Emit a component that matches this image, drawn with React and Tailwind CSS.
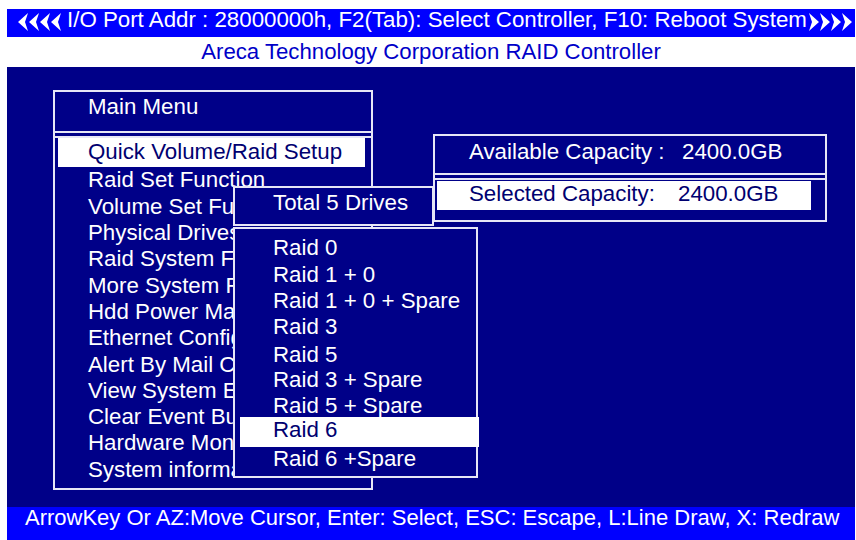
import React from 'react'

const mainItems = [
  'Quick Volume/Raid Setup',
  'Raid Set Function',
  'Volume Set Function',
  'Physical Drives',
  'Raid System Function',
  'More System Functions',
  'Hdd Power Management',
  'Ethernet Configuration',
  'Alert By Mail Config',
  'View System Events',
  'Clear Event Buffer',
  'Hardware Monitor',
  'System information',
]

const raidLevels = [
  'Raid 0',
  'Raid 1 + 0',
  'Raid 1 + 0 + Spare',
  'Raid 3',
  'Raid 5',
  'Raid 3 + Spare',
  'Raid 5 + Spare',
]

function Arrows({ dir }) {
  // four notched arrowheads, like the BIOS glyphs
  const heads = [0, 11, 22, 33]
  return (
    <svg width="44" height="18" viewBox="0 0 44 18" className="shrink-0 mt-[4px]">
      <g fill="#ffffff" transform={dir === 'right' ? 'translate(44 0) scale(-1 1)' : undefined}>
        {heads.map((x) => (
          <path key={x} d={`M${x} 9 L${x + 10} 0 L${x + 7} 9 L${x + 10} 18 Z`} />
        ))}
      </g>
    </svg>
  )
}

export default function App() {
  return (
    <div className="w-[856px] h-[540px] overflow-hidden bg-white pl-[7px] pr-[1px] pt-[9px] flex flex-col font-['Liberation_Sans',Arial,sans-serif]">

      {/* top status bar */}
      <div className="h-[28px] shrink-0 bg-[#0000ff] text-white flex items-start pl-[11px]">
        <Arrows dir="left" />
        <span className="ml-[5px] mr-[1px] text-[22.3px] leading-[22px] whitespace-nowrap">
          I/O Port Addr : 28000000h, F2(Tab): Select Controller, F10: Reboot System
        </span>
        <Arrows dir="right" />
      </div>

      {/* title band */}
      <div className="h-[30px] shrink-0 flex items-center justify-center text-[#0000c8] text-[22.2px] leading-[26px]">
        Areca Technology Corporation RAID Controller
      </div>

      {/* main screen */}
      <div className="relative h-[440px] shrink-0 bg-[#000088] text-white text-[22.3px]">

        {/* Main Menu */}
        <div className="mt-[23px] ml-[46px] w-[320px] h-[400px] border-2 border-[#e6e6f6] flex flex-col">
          <div className="h-[39px] shrink-0 pl-[33px] leading-[30px]">Main Menu</div>
          <div className="h-[7px] shrink-0 border-y-2 border-[#e6e6f6]" />
          <div className="flex flex-col">
            {mainItems.map((item, i) => (
              <div
                key={item}
                className={
                  i === 0
                    ? 'h-[29px] ml-[3px] mr-[6px] pl-[30px] pb-[2px] flex items-center bg-white text-[#000070] whitespace-nowrap'
                    : 'h-[26.3px] ml-[3px] mr-[6px] pl-[30px] flex items-center whitespace-nowrap'
                }
              >
                {item}
              </div>
            ))}
          </div>
        </div>

        {/* Capacity window */}
        <div className="absolute left-[426px] top-[67px] w-[394px] h-[88px] border-2 border-[#e6e6f6] bg-[#000088] flex flex-col">
          <div className="h-[37px] shrink-0 pl-[34px] leading-[32px] flex whitespace-nowrap">
            <span className="w-[213px]">Available Capacity :</span>
            <span>2400.0GB</span>
          </div>
          <div className="h-[7px] shrink-0 border-y-2 border-[#e6e6f6]" />
          <div className="mt-[1px] ml-[2px] w-[374px] h-[29px] pl-[32px] pb-[4px] bg-white text-[#000070] flex items-center whitespace-nowrap">
            <span className="w-[209px]">Selected Capacity:</span>
            <span>2400.0GB</span>
          </div>
        </div>

        {/* Raid level popup */}
        <div className="absolute left-[226px] top-[119px] flex flex-col">
          <div className="w-[201px] h-[40px] border-2 border-[#e6e6f6] bg-[#000088] pl-[38px] leading-[30px] whitespace-nowrap">
            Total 5 Drives
          </div>
          <div className="mt-[1px] w-[245px] h-[251px] border-2 border-[#e6e6f6] bg-[#000088] pt-[6px] flex flex-col">
            {raidLevels.map((r, i) => (
              <div
                key={r}
                className={
                  i === 4
                    ? 'h-[26.3px] shrink-0 pl-[38px] pt-[3px] flex items-center whitespace-nowrap'
                    : 'h-[26.3px] shrink-0 pl-[38px] flex items-center whitespace-nowrap'
                }
              >
                {r}
              </div>
            ))}
            <div className="-mt-[2px] ml-[5px] -mr-[3px] h-[30px] shrink-0 pl-[33px] pb-[5px] bg-white text-[#000070] flex items-center">
              Raid 6
            </div>
            <div className="h-[26px] shrink-0 pl-[38px] pb-[3px] flex items-center whitespace-nowrap">
              Raid 6 +Spare
            </div>
          </div>
        </div>
      </div>

      {/* bottom help bar */}
      <div className="flex-1 bg-[#0000ff] text-white pl-[18px] text-[22px] leading-[22px] whitespace-nowrap">
        ArrowKey Or AZ:Move Cursor, Enter: Select, ESC: Escape, L:Line Draw, X: Redraw
      </div>
    </div>
  )
}
